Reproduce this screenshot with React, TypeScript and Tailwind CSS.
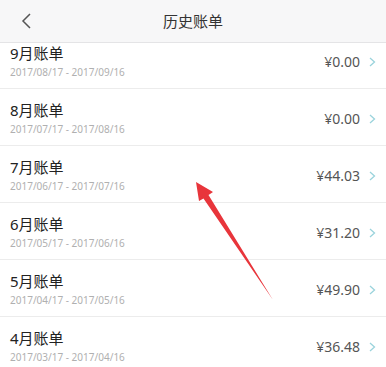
import React from "react";

const rows = [
  { m: "9月账单", d: "2017/08/17 - 2017/09/16", a: "¥0.00" },
  { m: "8月账单", d: "2017/07/17 - 2017/08/16", a: "¥0.00" },
  { m: "7月账单", d: "2017/06/17 - 2017/07/16", a: "¥44.03" },
  { m: "6月账单", d: "2017/05/17 - 2017/06/16", a: "¥31.20" },
  { m: "5月账单", d: "2017/04/17 - 2017/05/16", a: "¥49.90" },
  { m: "4月账单", d: "2017/03/17 - 2017/04/16", a: "¥36.48" },
];

const font = { fontFamily: '"Noto Sans", "Noto Sans CJK SC", sans-serif' };

export default function App() {
  return (
    <div className="relative w-[386px] h-[367px] overflow-hidden bg-white" style={font}>
      <div className="h-[43px] bg-[#f7f7f8] border-b border-[#e4e4e6] flex items-center relative z-10">
        <svg width="12" height="18" viewBox="0 0 12 18" className="ml-[20px]">
          <path d="M10 2 L3 9 L10 16" fill="none" stroke="#555" strokeWidth="1.5" />
        </svg>
        <div className="absolute left-0 right-0 text-center text-[15px] text-[#333] pointer-events-none">历史账单</div>
      </div>
      <div className="-mt-[11px]">
        {rows.map((r) => (
          <div key={r.m} className="h-[57px] border-b border-[#ececec] flex items-start pl-[10px] pr-[10px]">
            <div className="flex-1 flex flex-col pt-[11px]">
              <div className="text-[15px] leading-[20px] text-[#222]">{r.m}</div>
              <div className="text-[10px] leading-[12px] mt-[3px] text-[#b0b0b0]">{r.d}</div>
            </div>
            <div className="text-[14px] leading-[20px] text-[#555] mt-[20px]">{r.a}</div>
            <svg width="7" height="10" viewBox="0 0 7 10" className="ml-[9px] mt-[25px]">
              <path d="M1 1 L5.5 5 L1 9" fill="none" stroke="#9ad3dc" strokeWidth="1.3" />
            </svg>
          </div>
        ))}
      </div>
      <svg className="absolute left-0 top-0 pointer-events-none" width="386" height="367">
        <polygon
          points="196,182 213,192 208.5,195 273,300 203.5,198.5 199,201"
          fill="#e8353b"
        />
      </svg>
    </div>
  );
}
